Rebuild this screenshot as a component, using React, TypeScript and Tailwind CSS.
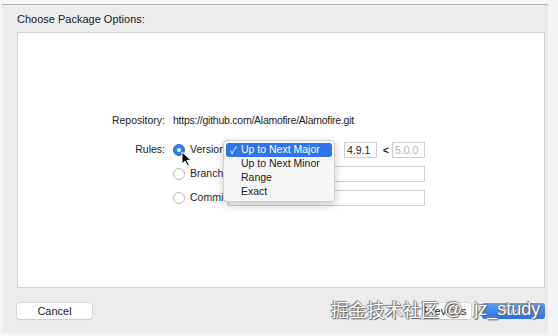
import React from 'react'

const font = "font-['Liberation_Sans','Noto_Sans_CJK_SC',sans-serif]"

function Radio({ checked }: { checked?: boolean }) {
  if (checked) {
    return (
      <div className="w-[12px] h-[12px] rounded-full bg-[#2f7bf0] border border-[#2467d8] flex items-center justify-center shrink-0">
        <div className="w-[4px] h-[4px] rounded-full bg-white" />
      </div>
    )
  }
  return <div className="w-[12px] h-[12px] rounded-full bg-white border border-[#b9b9b9] shrink-0" />
}

function Field({ value, disabled, className }: { value?: string; disabled?: boolean; className?: string }) {
  return (
    <div
      className={`h-[16px] bg-white border border-[#cdcdcd] flex items-center px-[2px] text-[10.5px] leading-none ${
        disabled ? 'text-[#b5b5b5]' : 'text-[#222]'
      } ${className ?? ''}`}
    >
      {value}
    </div>
  )
}

function Cursor() {
  return (
    <svg width="11" height="16" viewBox="0 0 11 16" className="absolute left-[181px] top-[151px]">
      <path d="M1 1 L1 13 L4 10 L6.5 15 L8.3 14.2 L5.9 9.3 L10 9.3 Z" fill="#000" stroke="#fff" strokeWidth="1" strokeLinejoin="round" />
    </svg>
  )
}

export default function App() {
  const menu = ['Up to Next Major', 'Up to Next Minor', 'Range', 'Exact']

  return (
    <div className={`relative w-[558px] h-[336px] bg-[#f5f5f5] pt-[4px] pl-[2px] overflow-hidden ${font}`}>
      <div className="w-[546px] h-[329px] bg-[#ececec] border-t border-[#b4b4b4] pl-[15px] pr-[3px] pt-[7px] flex flex-col">
        <div className="text-[11px] leading-[14px] text-[#222]">Choose Package Options:</div>

        {/* options panel */}
        <div className="mt-[6px] h-[256px] bg-white border border-[#d2d2d2] pt-[76px] pl-[87px] flex flex-col text-[10.5px] text-[#222]">
          <div className="h-[24px] flex items-center">
            <div className="w-[60px] text-right">Repository:</div>
            <div className="ml-[8px] tracking-[-0.25px]">https://github.com/Alamofire/Alamofire.git</div>
          </div>

          <div className="mt-[5px] h-[24px] flex items-center">
            <div className="w-[60px] text-right">Rules:</div>
            <div className="ml-[8px] flex items-center">
              <Radio checked />
              <div className="ml-[5px] w-[36px]">Version</div>
              <div className="ml-[2px] w-[112px] h-[16px]" />
              <Field value="4.9.1" className="ml-[4px] w-[33px]" />
              <div className="ml-[6px] w-[9px] font-bold text-[10px]">&lt;</div>
              <Field value="5.0.0" disabled className="w-[33px]" />
            </div>
          </div>

          <div className="h-[24px] flex items-center">
            <div className="w-[60px]" />
            <div className="ml-[8px] flex items-center">
              <Radio />
              <div className="ml-[5px] w-[38px]">Branch</div>
              <Field className="w-[197px]" />
            </div>
          </div>

          <div className="h-[24px] flex items-center">
            <div className="w-[60px]" />
            <div className="ml-[8px] flex items-center">
              <Radio />
              <div className="ml-[5px] w-[38px]">Commit</div>
              <Field className="w-[197px]" />
            </div>
          </div>
        </div>

        {/* buttons */}
        <div className="mt-[15px] flex items-center text-[11px] text-[#222]">
          <div className="w-[75px] h-[16px] bg-white rounded-[3px] shadow-[0_0_0_0.5px_#c4c4c4,0_1px_1px_rgba(0,0,0,0.12)] flex items-center justify-center">
            Cancel
          </div>
          <div className="ml-auto w-[52px] h-[16px] bg-white rounded-[3px] shadow-[0_0_0_0.5px_#c4c4c4,0_1px_1px_rgba(0,0,0,0.12)] flex items-center justify-center">
            Previous
          </div>
          <div className="ml-[11px] w-[63px] h-[16px] rounded-[3px] bg-gradient-to-b from-[#5a9cf8] to-[#2a6fe6] text-white flex items-center justify-center">
            Next
          </div>
        </div>
      </div>

      {/* version popup menu */}
      <div className="absolute left-[223px] top-[140px] w-[112px] h-[62px] bg-[#f6f6f6] rounded-[4px] border border-[#d0d0d0] shadow-[0_3px_8px_rgba(0,0,0,0.22)] p-[2px] text-[10.5px] text-[#222]">
        {menu.map((item, i) => (
          <div
            key={item}
            className={`h-[14px] flex items-center rounded-[3px] ${i === 0 ? 'bg-[#2f74ec] text-white' : ''}`}
          >
            <span className="w-[15px] pl-[4px] text-[10px]">{i === 0 ? '✓' : ''}</span>
            {item}
          </div>
        ))}
      </div>

      <Cursor />

      {/* watermark */}
      <div className="absolute left-[331px] top-[297px] flex items-center h-[24px] text-white [text-shadow:0_0_1px_#444,1px_1px_1px_#666,-1px_-1px_1px_#888]">
        <span className="text-[18px] font-['Noto_Sans_CJK_SC',sans-serif]">掘金技术社区</span>
        <span className="ml-[5px] text-[18px]">@</span>
        <span className="ml-[12px] text-[18px]">jz_study</span>
      </div>
    </div>
  )
}
